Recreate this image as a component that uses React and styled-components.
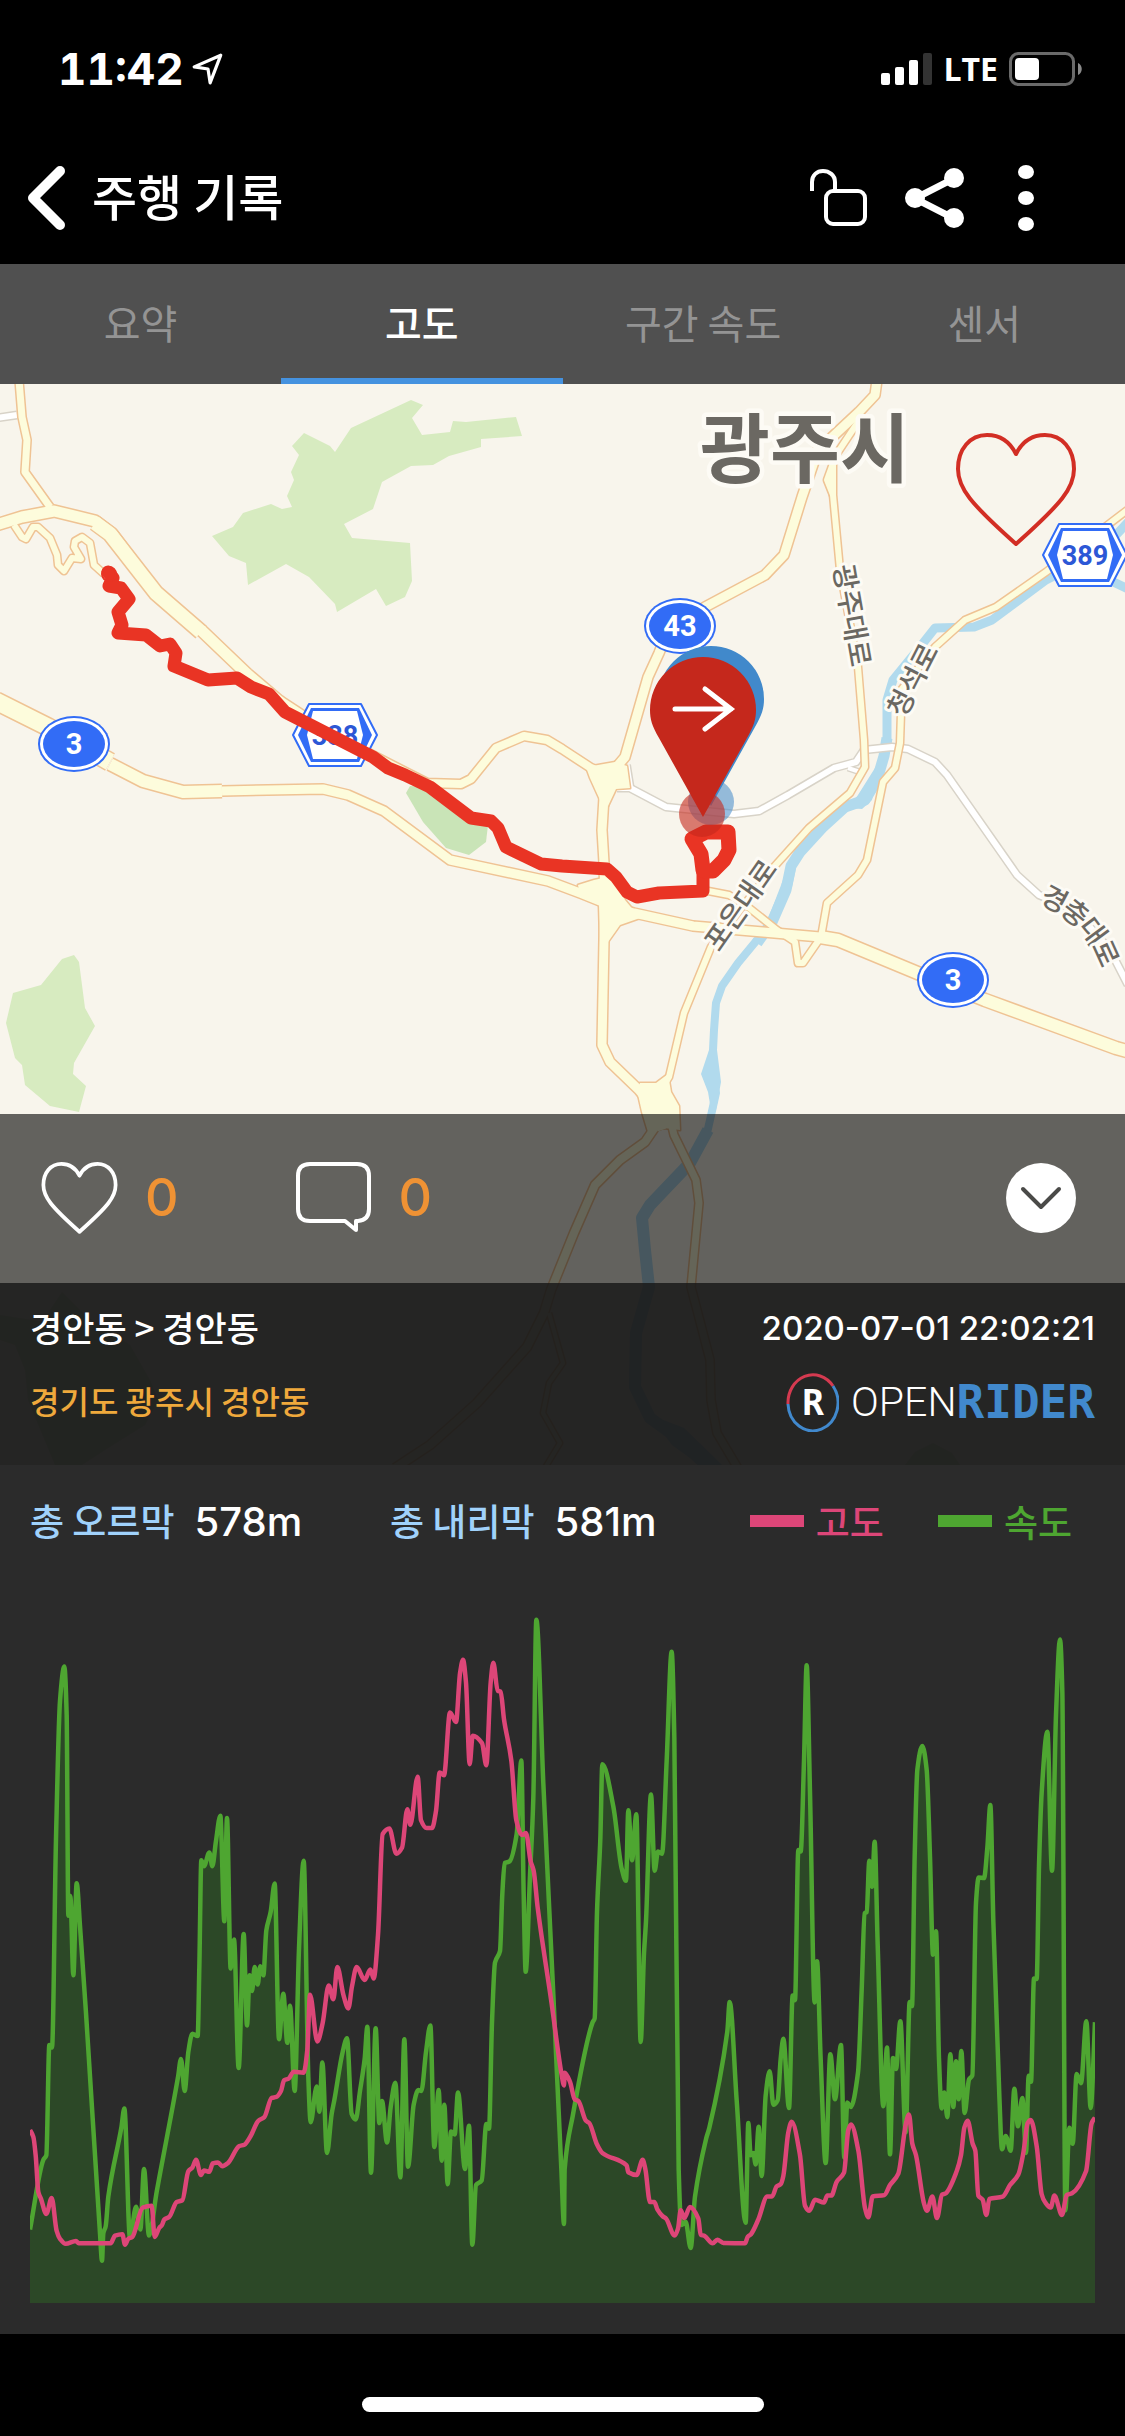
import React, { useState } from 'react'
import styled, { createGlobalStyle } from 'styled-components'

const GlobalStyle = createGlobalStyle`
  * {
    box-sizing: border-box;
  }

  body {
    margin: 0;
    background: #000;
    color: #fff;
    font-family: 'Noto Sans CJK KR', sans-serif;
  }

  button {
    display: flex;
    align-items: center;
    justify-content: center;
    padding: 0;
    border: 0;
    background: none;
    color: inherit;
    font: inherit;
    cursor: pointer;
  }

  svg {
    display: block;
    flex: none;
  }
`

const StatusBar = styled.div`
  display: flex;
  align-items: center;
  height: 132px;
  padding: 6px 42px 0 58px;
`

const Clock = styled.time`
  margin-right: 8px;
  font: 700 44px/48px Inter, sans-serif;
  font-variant-numeric: tabular-nums;
`

const StatusRight = styled.div`
  display: flex;
  align-items: center;
  gap: 11px;
  margin-left: auto;
`

const Network = styled.span`
  font: 700 32px/40px 'Open Sans', sans-serif;
`

const Header = styled.header`
  display: flex;
  align-items: center;
  height: 132px;
  padding: 0 91px 0 26px;
`

const Title = styled.h1`
  flex: 1;
  margin: 0 0 0 26px;
  padding-bottom: 6px;
  font-size: 49px;
  line-height: 64px;
  font-weight: 500;
`

const HeaderActions = styled.div`
  display: flex;
  align-items: center;
`

const HeaderButton = styled.button`
  margin-left: ${({ $gap }) => $gap || 0}px;
`

const Tabs = styled.div`
  display: grid;
  grid-template-columns: repeat(4, 1fr);
  height: 120px;
  background: #505050;
`

const Tab = styled.button`
  && {
    padding-top: 2px;
    border-bottom: 6px solid ${({ $active }) => ($active ? '#4592df' : 'transparent')};
    color: ${({ $active }) => ($active ? '#fff' : '#949494')};
    font-size: 40px;
    line-height: 56px;
    font-weight: ${({ $active }) => ($active ? 500 : 400)};
  }
`

const MapSection = styled.section`
  display: grid;
  grid-template-rows: 730px auto auto;
  background: #f8f5ec;
`

const MapCanvas = styled.svg`
  grid-area: 1 / 1 / 4 / 2;
  width: 100%;
  height: 0;
  min-height: 100%;
`

const MapLike = styled.button`
  grid-area: 1 / 1 / 2 / 2;
  place-self: start end;
  margin: 48px 49px 0 0;
`

const ActionBar = styled.div`
  grid-area: 2 / 1 / 3 / 2;
  display: flex;
  align-items: center;
  height: 169px;
  padding: 0 49px 2px 42px;
  background: rgba(0, 0, 0, 0.6);
`

const CountButton = styled.button`
  && {
    gap: 28px;
    margin-right: 117px;
    color: #ef9234;
    font: 500 52px/60px Inter, sans-serif;
  }
`

const ExpandButton = styled.button`
  && {
    width: 70px;
    height: 70px;
    margin-left: auto;
    border-radius: 50%;
    background: #fff;
  }
`

const InfoBar = styled.div`
  grid-area: 3 / 1 / 4 / 2;
  height: 182px;
  padding: 15px 30px 0;
  background: rgba(20, 20, 20, 0.93);
`

const InfoRow = styled.div`
  display: flex;
  align-items: center;
  justify-content: space-between;
  height: 60px;
  margin-bottom: 14px;
`

const Course = styled.span`
  padding-bottom: 4px;
  font-size: 35px;
  font-weight: 500;
`

const Address = styled.span`
  padding-bottom: 4px;
  color: #efa93c;
  font-size: 32px;
  font-weight: 500;
`

const RideDate = styled.time`
  font: 500 33px/40px Inter, sans-serif;
`

const Logo = styled.div`
  display: flex;
  align-items: center;
  height: 60px;
`

const LogoThin = styled.span`
  margin-left: 12px;
  font: 300 41px/60px Roboto, sans-serif;
`

const LogoBold = styled.span`
  color: #4189cd;
  font: 700 46px/60px 'DejaVu Sans Mono', monospace;
`

const ChartPanel = styled.section`
  padding: 0 30px 31px;
  background: #2b2b2b;
`

const StatRow = styled.div`
  display: grid;
  grid-template-columns: 360px 1fr auto;
  align-items: center;
  height: 114px;
  margin-bottom: 21px;
  font-size: 37px;
  font-weight: 500;
`

const Stat = styled.div`
  display: flex;
  align-items: center;
  gap: 20px;
`

const StatLabel = styled.span`
  padding-bottom: 4px;
  color: #a0d2fb;
`

const StatValue = styled.span`
  font: 500 40px/48px Inter, sans-serif;
`

const Legend = styled.div`
  display: flex;
  gap: 54px;
  padding-right: 23px;
`

const LegendItem = styled.span`
  display: flex;
  align-items: center;
  gap: 12px;
  padding-bottom: 2px;
  color: ${({ $color }) => $color};

  &::before {
    content: '';
    width: 54px;
    height: 12px;
    background: ${({ $color }) => $color};
  }
`

const Chart = styled.svg`
  width: 100%;
  height: 703px;
`

const HomeArea = styled.footer`
  display: flex;
  justify-content: center;
  height: 102px;
  padding-top: 63px;
`

const HomeIndicator = styled.div`
  width: 402px;
  height: 15px;
  border-radius: 8px;
  background: #fff;
`

const Label = styled.text`
  fill: #6b6862;
  stroke: #fdfbf5;
  stroke-width: ${({ $halo }) => $halo || 6}px;
  stroke-linejoin: round;
  paint-order: stroke;
  text-anchor: middle;
  dominant-baseline: central;
  font-family: 'Noto Sans CJK KR', sans-serif;
  font-size: ${({ $size }) => $size || 28}px;
  font-weight: ${({ $weight }) => $weight || 500};
`

const ShieldText = styled.text`
  fill: ${({ $color }) => $color || '#fff'};
  text-anchor: middle;
  font-family: Roboto, sans-serif;
  font-size: ${({ $size }) => $size || 29}px;
  font-weight: 700;
`

const COLORS = { speed: '#4ea631', altitude: '#dd4678' }

const TABS = ['요약', '고도', '구간 속도', '센서']

const HEART = 'M60 22C54 10 44 3 31 3C14 3 2 17 2 37C2 56 14 71 60 112C106 71 118 56 118 37C118 17 106 3 89 3C76 3 66 10 60 22z'

const PARKS = [
  '411,400 423,405 412,418 422,435 450,432 453,421 466,422 516,417 522,436 481,439 481,447 449,456 433,465 411,466 382,482 373,509 344,524 352,538 410,543 412,581 405,597 386,606 376,589 337,612 335,604 309,577 286,564 248,585 246,563 229,556 212,536 233,527 243,513 271,504 282,509 292,507 287,496 294,480 291,472 299,455 292,446 304,433 330,446 335,452 351,428',
  '74,955 79,962 85,1008 95,1026 74,1063 73,1074 86,1086 79,1112 50,1106 25,1085 22,1065 15,1058 6,1023 13,993 41,985 62,959',
  '62,1292 50,1310 45,1322 0,1315 0,1340 15,1345 25,1370 28,1400 55,1465 82,1465 105,1450 145,1425 158,1400 150,1380 130,1345 85,1315',
  '905,1465 915,1452 933,1443 952,1453 960,1465',
]

const WATER = [
  { w: 9, d: '1130,520 1116,535 1060,573 1046,580 992,620 974,627 935,628 920,647 893,680 887,700 887,743' },
  { w: 9, d: '1105,578 1130,590' },
  { w: 11, d: '887,738 884,756 877,780 865,800 845,807 822,828 800,852 791,866 786,890 772,922 757,943' },
  { w: 8, d: '757,940 738,963 722,986 716,1003 714,1030 713,1050 712,1073 716,1093 710,1120 707,1133' },
  { w: 12, d: '708,1130 690,1163 650,1205 642,1218 645,1250 649,1287 636,1333 635,1387 650,1418 675,1436 712,1470' },
]

const YELLOW_ROADS = [
  { w: 7, d: '19,380 22,417 27,440 25,472 50,507' },
  { w: 6, d: '14,525 22,537 26,539 33,527 38,527 50,538 57,555 58,565 64,571 72,558 81,559 74,547 75,541 82,537 90,543 94,565 104,574' },
  { w: 11, d: '-4,525 22,517 54,511 95,521 112,534 156,593' },
  { w: 14, d: '95,523 110,534 156,593 201,632' },
  { w: 11, d: '201,630 247,674 280,702' },
  { w: 8, d: '280,700 335,736 427,783 461,784 471,779 496,748 524,736 547,740 562,749 591,768 609,776' },
  { w: 17, d: '-4,701 48,727 110,762' },
  { w: 12, d: '110,764 143,781 183,792 222,791' },
  { w: 9, d: '222,791 323,789 348,795 384,811 450,860 548,881 580,893 605,903' },
  { w: 9, d: '877,380 875,395 859,412 829,440 818,450 802,497 784,555 765,575 705,607 668,630 659,653 648,677 625,757 609,776' },
  { w: 6, d: '859,415 858,422 836,455 827,480 833,495' },
  { w: 6, d: '833,460 833,495 840,570 858,667 864,740 865,767 850,793 809,828 773,868 711,947 684,1013 669,1077 658,1095' },
  { w: 6, d: '1130,508 1046,572 996,607 965,620 935,647 901,690 901,713 900,743 895,768 883,782 867,860 858,875 827,903 821,937 803,963 798,963 795,942 777,930 748,907 729,895 703,890' },
  { w: 9, d: '609,773 604,797 602,830 604,863 605,905 604,940 602,1045 610,1062 639,1090 655,1110 662,1130' },
  { w: 9, d: '605,905 634,913 693,926 763,932 820,937' },
  { w: 12, d: '820,937 838,940 920,974 985,1000 1116,1048 1130,1052' },
  { w: 8, d: '660,1120 645,1142 620,1160 595,1185 574,1233 551,1290 544,1313 527,1347 477,1403 430,1445 395,1468' },
  { w: 4, d: '549,1313 563,1363 549,1383 543,1413 560,1443 545,1468' },
  { w: 7, d: '668,1110 674,1135 696,1180 699,1203 691,1287 710,1360 711,1400 717,1433 739,1470' },
]

const JUNCTIONS = [
  '586,767 598,765 615,762 627,766 630,788 616,789 608,806 600,800 590,778',
  '578,885 594,880 612,876 625,900 640,918 620,925 608,942 600,940 599,905 580,895',
  '640,1083 656,1083 668,1074 671,1092 679,1106 680,1130 664,1128 648,1132 642,1112 637,1090',
]

const WHITE_ROADS = [
  { w: 6, d: '-4,418 17,415' },
  { w: 5, d: '627,765 631,790' },
  { w: 6, d: '617,788 630,788 666,807 734,814 759,811 788,795 834,768 856,762 864,750 892,747 908,749 935,762 947,775 1017,875 1039,895 1075,910 1110,950 1128,985' },
  { w: 4, d: '848,768 860,772' },
]

const ROUTE = '108,572 113,578 109,586 121,588 129,599 118,612 122,625 118,633 146,635 160,646 170,644 176,653 174,666 208,680 237,678 251,687 269,694 285,712 373,757 388,768 405,775 430,787 471,818 491,821 498,828 506,847 541,864 562,866 607,869 616,877 627,892 637,897 659,893 703,891 703,868'
const ROUTE_LOOP = '703,870 701,854 692,839 706,832 728,832 729,850 724,860 713,871 705,871'

const SPEED = [
  [90, 1372], [130, 1220], [139, 1210], [148, 970], [156, 975], [168, 520], [180, 220], [193, 145], [200, 250], [205, 688],
  [211, 645], [220, 818], [230, 617], [240, 710], [258, 900], [300, 1380], [306, 1440], [310, 1380], [317, 1365], [325, 1300],
  [364, 1150], [373, 1108], [390, 1390], [408, 1322], [421, 1372], [432, 1240], [447, 1385], [470, 1290], [534, 1040], [543, 1000],
  [554, 1070], [565, 985], [577, 945], [593, 950], [598, 800], [604, 567], [612, 580], [628, 550], [637, 580], [648, 525],
  [661, 470], [673, 700], [681, 475], [692, 803], [702, 740], [716, 1020], [731, 728], [741, 927], [749, 818], [756, 852],
  [764, 800], [773, 838], [781, 798], [790, 818], [799, 720], [812, 680], [824, 618], [837, 957], [850, 858], [862, 965],
  [870, 884], [884, 1070], [897, 760], [911, 568], [925, 1040], [932, 1138], [950, 1060], [958, 1115], [967, 1008], [981, 1205],
  [995, 1120], [1003, 1090], [1028, 985], [1041, 955], [1055, 1120], [1067, 1132], [1080, 1070], [1094, 1000], [1102, 930], [1113, 1248],
  [1127, 933], [1138, 1140], [1146, 1092], [1161, 1182], [1172, 1105], [1186, 1052], [1201, 1258], [1213, 957], [1224, 1235], [1241, 1100],
  [1255, 1068], [1264, 1070], [1278, 985], [1291, 927], [1303, 1192], [1316, 1068], [1325, 1222], [1333, 1100], [1343, 1273], [1353, 1158],
  [1364, 1165], [1374, 1073], [1395, 1240], [1407, 1146], [1417, 1405], [1428, 1275], [1445, 1265], [1459, 1142], [1467, 1152], [1476, 920],
  [1485, 790], [1500, 765], [1507, 640], [1514, 573], [1528, 570], [1550, 510], [1564, 350], [1571, 640], [1577, 810], [1590, 600],
  [1600, 430], [1609, 43], [1630, 400], [1660, 860], [1684, 1240], [1692, 1360], [1694, 1240], [1718, 1125], [1778, 920], [1784, 912],
  [1791, 680], [1801, 520], [1807, 358], [1840, 450], [1865, 585], [1878, 612], [1885, 458], [1896, 567], [1909, 467], [1922, 963],
  [1932, 770], [1938, 700], [1953, 424], [1964, 590], [1974, 548], [1986, 553], [2000, 350], [2015, 113], [2023, 300], [2036, 1240],
  [2044, 1362], [2057, 1355], [2072, 1412], [2085, 1300], [2118, 1175], [2128, 1150], [2182, 940], [2189, 876], [2210, 1090], [2237, 1357],
  [2245, 1140], [2252, 1210], [2260, 1205], [2267, 1230], [2276, 1148], [2285, 1255], [2297, 1080], [2309, 1027], [2320, 1100], [2333, 1090],
  [2342, 1000], [2350, 956], [2367, 1107], [2378, 862], [2385, 872], [2395, 545], [2402, 548], [2412, 350], [2420, 142], [2430, 420],
  [2444, 877], [2451, 787], [2462, 1000], [2477, 1227], [2491, 990], [2505, 1088], [2523, 970], [2533, 1215], [2542, 1095], [2552, 1105],
  [2574, 1030], [2585, 850], [2594, 683], [2600, 680], [2608, 568], [2616, 625], [2624, 527], [2633, 750], [2650, 1103], [2661, 975],
  [2670, 1208], [2679, 998], [2688, 1022], [2701, 918], [2717, 1160], [2729, 876], [2736, 885], [2744, 560], [2752, 370], [2767, 318],
  [2780, 370], [2790, 560], [2799, 773], [2808, 722], [2817, 1000], [2825, 1108], [2833, 1073], [2842, 1127], [2851, 990], [2860, 1105],
  [2868, 1005], [2876, 1088], [2884, 983], [2894, 1118], [2907, 1045], [2917, 1036], [2928, 660], [2936, 605], [2952, 606], [2962, 540],
  [2971, 447], [2980, 700], [2998, 1080], [3006, 1197], [3017, 1168], [3032, 1200], [3043, 1065], [3054, 1147], [3067, 1085], [3078, 1205],
  [3086, 1037], [3093, 1050], [3102, 825], [3110, 826], [3117, 580], [3125, 420], [3142, 287], [3156, 590], [3168, 250], [3180, 86],
  [3187, 200], [3196, 1330], [3208, 1150], [3218, 1185], [3230, 1033], [3243, 1053], [3259, 918], [3272, 1107], [3285, 920],
]

const ALTITUDE = [
  [90, 1155], [100, 1170], [107, 1210], [115, 1290], [123, 1305], [139, 1338], [155, 1303], [170, 1375], [180, 1392], [197, 1403],
  [228, 1397], [236, 1402], [332, 1402], [345, 1385], [367, 1382], [375, 1405], [385, 1392], [397, 1388], [428, 1324], [455, 1320],
  [464, 1388], [478, 1368], [486, 1362], [493, 1350], [508, 1344], [530, 1312], [547, 1308], [565, 1245], [577, 1237], [588, 1220],
  [603, 1253], [612, 1243], [628, 1246], [638, 1228], [654, 1226], [667, 1234], [684, 1227], [718, 1190], [733, 1187], [752, 1168],
  [775, 1135], [793, 1127], [815, 1085], [829, 1083], [843, 1070], [852, 1047], [866, 1043], [881, 1028], [911, 1030], [922, 980],
  [930, 860], [952, 962], [968, 922], [986, 840], [1000, 870], [1012, 800], [1030, 860], [1045, 890], [1056, 842], [1070, 800],
  [1094, 828], [1111, 805], [1121, 825], [1134, 730], [1148, 510], [1168, 498], [1189, 553], [1206, 540], [1222, 456], [1231, 490],
  [1253, 385], [1263, 480], [1280, 497], [1296, 497], [1308, 460], [1319, 376], [1332, 382], [1350, 245], [1368, 266], [1380, 160],
  [1389, 130], [1398, 180], [1409, 358], [1418, 296], [1446, 312], [1459, 360], [1472, 180], [1480, 137], [1493, 198], [1502, 200],
  [1512, 260], [1534, 350], [1549, 480], [1566, 512], [1578, 508], [1592, 570], [1601, 590], [1613, 670], [1655, 880], [1685, 1035],
  [1692, 1058], [1694, 1030], [1710, 1050], [1724, 1088], [1735, 1092], [1758, 1135], [1768, 1140], [1790, 1185], [1807, 1205], [1880, 1232],
  [1885, 1247], [1910, 1253], [1928, 1220], [1936, 1240], [1950, 1312], [1963, 1312], [1972, 1328], [1988, 1343], [1998, 1348], [2024, 1385],
  [2034, 1370], [2042, 1330], [2053, 1347], [2070, 1323], [2095, 1348], [2102, 1383], [2114, 1386], [2138, 1402], [2152, 1394], [2170, 1401],
  [2235, 1402], [2243, 1388], [2253, 1382], [2275, 1350], [2302, 1300], [2316, 1300], [2330, 1278], [2342, 1273], [2350, 1255], [2365, 1160],
  [2375, 1137], [2400, 1210], [2415, 1320], [2428, 1331], [2445, 1307], [2472, 1313], [2482, 1298], [2494, 1298], [2510, 1268], [2532, 1248],
  [2545, 1155], [2553, 1143], [2575, 1200], [2595, 1325], [2605, 1345], [2618, 1300], [2653, 1297], [2670, 1275], [2695, 1250], [2718, 1140],
  [2727, 1121], [2737, 1185], [2748, 1210], [2772, 1315], [2781, 1331], [2797, 1300], [2811, 1347], [2826, 1296], [2837, 1293], [2870, 1245],
  [2883, 1210], [2893, 1150], [2903, 1135], [2918, 1185], [2926, 1200], [2935, 1298], [2948, 1307], [2959, 1340], [2968, 1305], [3008, 1300],
  [3030, 1275], [3055, 1252], [3070, 1205], [3083, 1140], [3092, 1133], [3110, 1190], [3125, 1295], [3135, 1312], [3152, 1324], [3163, 1298],
  [3186, 1340], [3200, 1297], [3216, 1293], [3258, 1245], [3275, 1140], [3285, 1128],
]

// monotone cubic curve, never overshoots the samples
const curve = points => {
  const slope = i => (points[i + 1][1] - points[i][1]) / (points[i + 1][0] - points[i][0])
  const tangents = points.map((p, i) => {
    if (i === 0) return slope(0)
    if (i === points.length - 1) return slope(i - 1)
    const a = slope(i - 1)
    const b = slope(i)
    return a * b <= 0 ? 0 : (2 * a * b) / (a + b)
  })

  return points.slice(1).reduce((d, [x, y], i) => {
    const [px, py] = points[i]
    const h = (x - px) / 3
    const c = [px + h, py + tangents[i] * h, x - h, y - tangents[i + 1] * h, x, y]
    return `${d}C${c.map(n => n.toFixed(1)).join(' ')}`
  }, `M${points[0].join(' ')}`)
}

function Heart ({ width, height, color, stroke }) {
  return (
    <svg width={width} height={height} viewBox="0 0 120 114" fill="none" stroke={color} strokeWidth={stroke} strokeLinejoin="round" overflow="visible">
      <path d={HEART}/>
    </svg>
  )
}

function Roads ({ roads, junctions = [], casing, fill }) {
  return (
    <g fill="none" strokeLinejoin="round">
      {roads.map(({ w, d }) => <polyline key={d} points={d} stroke={casing} strokeWidth={w + 3}/>)}
      {junctions.map(d => <polygon key={d} points={d} stroke={casing} strokeWidth="3"/>)}
      {roads.map(({ w, d }) => <polyline key={d} points={d} stroke={fill} strokeWidth={w}/>)}
      {junctions.map(d => <polygon key={d} points={d} fill={fill}/>)}
    </g>
  )
}

function NationalShield ({ x, y, children }) {
  return (
    <g transform={`translate(${x} ${y})`}>
      <ellipse rx="36" ry="28" fill="#326cf6"/>
      <ellipse rx="34" ry="26" fill="#fff"/>
      <ellipse rx="31" ry="23" fill="#326cf6"/>
      <ShieldText y="10">{children}</ShieldText>
    </g>
  )
}

function LocalShield ({ x, y, children }) {
  return (
    <g transform={`translate(${x} ${y})`}>
      <polygon points="-42,0 -26,-31 26,-31 42,0 26,31 -26,31" fill="#fff" stroke="#326cf6" strokeWidth="2" strokeLinejoin="round"/>
      <polygon points="-37,0 -24,-27 24,-27 37,0 24,27 -24,27" fill="#326cf6"/>
      <polygon points="-28,0 -22,-24 22,-24 28,0 22,24 -22,24" fill="#fff"/>
      <ShieldText y="10" $color="#2c57d6" $size={27}>{children}</ShieldText>
    </g>
  )
}

const PIN = 'M0 0L-44 -79C-51 -91 -53 -98 -53 -107A53 53 0 0 1 53 -107C53 -98 51 -91 44 -79z'

function RideMap () {
  return (
    <MapCanvas viewBox="0 384 1125 1081" preserveAspectRatio="xMidYMid slice" role="img" aria-label="주행 경로 지도">
      {PARKS.map(d => <polygon key={d} points={d} fill="#d7ebc0"/>)}
      <polygon points="410,786 406,793 423,822 446,848 469,855 486,842 488,825 430,787" fill="#c9e4b7"/>
      <g fill="none" stroke="#b1daed" strokeLinejoin="round">
        {WATER.map(({ w, d }) => <polyline key={d} points={d} strokeWidth={w}/>)}
      </g>
      <polygon points="880,760 872,800 862,809 848,808 858,795" fill="#b1daed"/>
      <polygon points="783,880 792,865 796,868 792,887 776,920 766,924" fill="#b1daed"/>
      <polygon points="709,1050 701,1074 708,1092 711,1110 716,1110 721,1082 717,1050" fill="#b1daed"/>
      <polygon points="650,1415 684,1428 722,1465 700,1465 672,1445" fill="#b1daed"/>
      <Roads roads={WHITE_ROADS} casing="#d8d3c8" fill="#fff"/>
      <Roads roads={YELLOW_ROADS} junctions={JUNCTIONS} casing="#efc394" fill="#fdfcdc"/>

      <Label x="805" y="444" $size={76} $weight={700} $halo={9}>광주시</Label>
      <Label transform="translate(854 615) rotate(80)">광주대로</Label>
      <Label transform="translate(911 679) rotate(-63)">청석로</Label>
      <Label transform="translate(739 904) rotate(-55)">포은대로</Label>
      <path id="gyeongchung" d="M1044 892C1074 906 1098 924 1112 964" fill="none"/>
      <Label><textPath href="#gyeongchung" startOffset="50%">경충대로</textPath></Label>

      <NationalShield x={74} y={744}>3</NationalShield>
      <NationalShield x={680} y={626}>43</NationalShield>
      <NationalShield x={953} y={980}>3</NationalShield>
      <LocalShield x={335} y={735}>338</LocalShield>
      <LocalShield x={1085} y={555}>389</LocalShield>

      <g fill="none" stroke="#e93424" strokeLinejoin="round" strokeLinecap="round">
        <polyline points={ROUTE} strokeWidth="13"/>
        <polyline points={ROUTE_LOOP} strokeWidth="15"/>
        <circle cx="109" cy="574" r="1" strokeWidth="14"/>
      </g>

      <circle cx="711" cy="802" r="23" fill="#4189cb" opacity="0.55"/>
      <path d={PIN} transform="translate(711 806)" fill="#4189cb"/>
      <circle cx="702" cy="814" r="23" fill="#c5281c" opacity="0.6"/>
      <path d={PIN} transform="translate(703 817)" fill="#c5281c"/>
      <path d="M675 709H731M705 689L731 709L705 729" fill="none" stroke="#fff" strokeWidth="5" strokeLinecap="round"/>
    </MapCanvas>
  )
}

function ElevationChart () {
  const speed = curve(SPEED)

  return (
    <Chart viewBox="90 0 3195 1532" preserveAspectRatio="none" role="img" aria-label="고도 속도 그래프">
      <path d={`${speed}V1532H90z`} fill="#2c4827"/>
      <g fill="none" strokeWidth="4.5" strokeLinejoin="round">
        <path d={speed} stroke={COLORS.speed} vectorEffect="non-scaling-stroke"/>
        <path d={curve(ALTITUDE)} stroke={COLORS.altitude} vectorEffect="non-scaling-stroke"/>
      </g>
    </Chart>
  )
}

export default function App () {
  const [tab, setTab] = useState('고도')

  return (
    <main>
      <GlobalStyle/>
      <StatusBar>
        <Clock>11:42</Clock>
        <svg width="32" height="34" viewBox="0 0 30 32" fill="none" stroke="#fff" strokeWidth="3" strokeLinejoin="round">
          <path d="M27 3L2 14L15 16L17 29z"/>
        </svg>
        <StatusRight>
          <svg width="51" height="32" fill="#fff">
            <rect y="20" width="9" height="12" rx="2"/>
            <rect x="14" y="14" width="9" height="18" rx="2"/>
            <rect x="28" y="7" width="9" height="25" rx="2"/>
            <rect x="42" width="9" height="32" rx="2" fill="#333"/>
          </svg>
          <Network>LTE</Network>
          <svg width="74" height="34" fill="none">
            <rect x="1.5" y="1.5" width="63" height="31" rx="8" stroke="#6a6a6a" strokeWidth="3"/>
            <rect x="6" y="6" width="24" height="22" rx="4" fill="#fff"/>
            <path d="M69 11C74 13 74 21 69 23z" fill="#8a8a8a"/>
          </svg>
        </StatusRight>
      </StatusBar>

      <Header>
        <HeaderButton aria-label="뒤로">
          <svg width="40" height="66" fill="none" stroke="#fff" strokeWidth="10" strokeLinecap="round" strokeLinejoin="round">
            <path d="M34 6L7 33L34 60"/>
          </svg>
        </HeaderButton>
        <Title>주행 기록</Title>
        <HeaderActions>
          <HeaderButton aria-label="공개 설정">
            <svg width="58" height="58" fill="none" stroke="#fff" strokeWidth="4">
              <path d="M2 22V13C2 6 7 2 13 2S25 6 25 13V22"/>
              <rect x="16" y="22" width="39" height="33" rx="7"/>
            </svg>
          </HeaderButton>
          <HeaderButton $gap={37} aria-label="공유">
            <svg width="60" height="60" fill="#fff" stroke="#fff" strokeWidth="7">
              <path d="M49 10.5L10 30.5L49 50.5" fill="none"/>
              <g stroke="none">
                <circle cx="10" cy="30" r="10"/>
                <circle cx="49" cy="10" r="10"/>
                <circle cx="49" cy="50" r="10"/>
              </g>
            </svg>
          </HeaderButton>
          <HeaderButton $gap={53} aria-label="더보기">
            <svg width="16" height="66" fill="#fff">
              <ellipse cx="8" cy="7" rx="8" ry="7"/>
              <ellipse cx="8" cy="33" rx="8" ry="7"/>
              <ellipse cx="8" cy="59" rx="8" ry="7"/>
            </svg>
          </HeaderButton>
        </HeaderActions>
      </Header>

      <Tabs role="tablist">
        {TABS.map(name => (
          <Tab key={name} role="tab" aria-selected={name === tab} $active={name === tab} onClick={() => setTab(name)}>
            {name}
          </Tab>
        ))}
      </Tabs>

      <MapSection>
        <RideMap/>
        <MapLike aria-label="좋아요">
          <Heart width={120} height={114} color="#d22e24" stroke={4}/>
        </MapLike>
        <ActionBar>
          <CountButton aria-label="좋아요 0">
            <Heart width={75} height={71} color="#fff" stroke={6}/>
            0
          </CountButton>
          <CountButton aria-label="댓글 0">
            <svg width="75" height="71" fill="none" stroke="#fff" strokeWidth="4" strokeLinejoin="round">
              <path d="M14 2H61Q73 2 73 14V47Q73 58 62 59H60V68L49 59H14Q2 59 2 47V14Q2 2 14 2z"/>
            </svg>
            0
          </CountButton>
          <ExpandButton aria-label="펼치기">
            <svg width="42" height="24" fill="none" stroke="#4a4a48" strokeWidth="4" strokeLinecap="round" strokeLinejoin="round">
              <path d="M3 3L21 21L39 3"/>
            </svg>
          </ExpandButton>
        </ActionBar>
        <InfoBar>
          <InfoRow>
            <Course>경안동 &gt; 경안동</Course>
            <RideDate>2020-07-01 22:02:21</RideDate>
          </InfoRow>
          <InfoRow>
            <Address>경기도 광주시 경안동</Address>
            <Logo>
              <svg width="53" height="60" fill="none" strokeWidth="3">
                <path d="M2 32A25 28 0 0 1 47 14" stroke="#d53a50"/>
                <path d="M47 14A25 28 0 1 1 2 32" stroke="#4189cd"/>
                <text x="27" y="43" textAnchor="middle" fill="#fff" fontFamily="DejaVu Sans Mono, monospace" fontWeight="700" fontSize="36">R</text>
              </svg>
              <LogoThin>OPEN</LogoThin>
              <LogoBold>RIDER</LogoBold>
            </Logo>
          </InfoRow>
        </InfoBar>
      </MapSection>

      <ChartPanel>
        <StatRow>
          <Stat>
            <StatLabel>총 오르막</StatLabel>
            <StatValue>578m</StatValue>
          </Stat>
          <Stat>
            <StatLabel>총 내리막</StatLabel>
            <StatValue>581m</StatValue>
          </Stat>
          <Legend>
            <LegendItem $color={COLORS.altitude}>고도</LegendItem>
            <LegendItem $color={COLORS.speed}>속도</LegendItem>
          </Legend>
        </StatRow>
        <ElevationChart/>
      </ChartPanel>

      <HomeArea>
        <HomeIndicator/>
      </HomeArea>
    </main>
  )
}
